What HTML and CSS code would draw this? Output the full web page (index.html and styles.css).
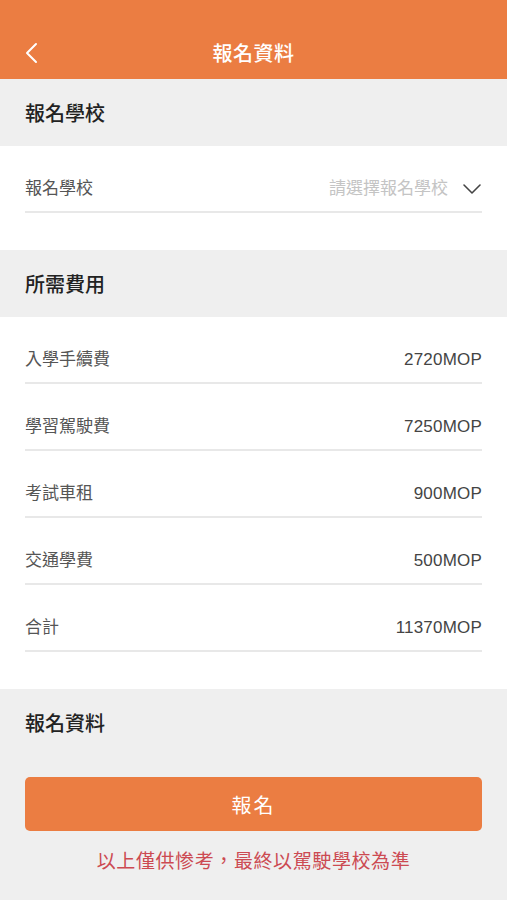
FILE: index.html
```html
<html>
<head>
    <meta name="viewport" content="width=device-width, initial-scale=1.0" />
    <title>報名資料</title>
    <link rel="stylesheet" href="styles.css">
</head>
<body>
    <header class="navbar">
        <div class="navbar-inner">
            <span class="back">
                <svg width="14" height="22" viewBox="0 0 14 22"><path d="M12 2 L3 11 L12 20" fill="none" stroke="#fff" stroke-width="2" stroke-linecap="round" stroke-linejoin="round"/></svg>
            </span>
            <span class="title">報名資料</span>
        </div>
    </header>

    <div class="section-title">報名學校</div>
    <div class="block">
        <div class="row">
            <span class="label">報名學校</span>
            <span class="picker">
                <span class="placeholder">請選擇報名學校</span>
                <svg width="20" height="12" viewBox="0 0 20 12"><path d="M2 2 L10 10 L18 2" fill="none" stroke="#444" stroke-width="1.6" stroke-linecap="round" stroke-linejoin="round"/></svg>
            </span>
        </div>
    </div>

    <div class="section-title">所需費用</div>
    <div class="block">
        <div class="row"><span class="label">入學手續費</span><span class="value">2720MOP</span></div>
        <div class="row"><span class="label">學習駕駛費</span><span class="value">7250MOP</span></div>
        <div class="row"><span class="label">考試車租</span><span class="value">900MOP</span></div>
        <div class="row"><span class="label">交通學費</span><span class="value">500MOP</span></div>
        <div class="row"><span class="label">合計</span><span class="value">11370MOP</span></div>
    </div>

    <div class="section-title">報名資料</div>
    <div class="footer">
        <button class="submit">報名</button>
        <p class="notice">以上僅供惨考，最終以駕駛學校為準</p>
    </div>
</body>
</html>
```

FILE: styles.css
```css
html, body {
    margin: 0;
    padding: 0;
    background-color: #efefef;
    font-family: "Liberation Sans", "Noto Sans CJK TC", sans-serif;
}
.navbar {
    background-color: #eb7d42;
    padding-top: 25px;
    height: 54px;
}
.navbar-inner {
    height: 54px;
    display: flex;
    align-items: center;
    justify-content: center;
    position: relative;
}
.back {
    position: absolute;
    left: 24px;
    top: 17px;
    display: flex;
}
.title {
    color: #fff;
    font-size: 20px;
    font-weight: 500;
    letter-spacing: 0.5px;
}
.section-title {
    height: 67px;
    box-sizing: border-box;
    padding: 0 25px;
    display: flex;
    align-items: center;
    font-size: 20px;
    font-weight: 500;
    color: #222;
}
.block {
    background-color: #fff;
    padding: 0 25px 37px 25px;
}
.row {
    height: 67px;
    box-sizing: border-box;
    padding-top: 31px;
    border-bottom: 2px solid #e8e8e8;
    display: flex;
    justify-content: space-between;
    align-items: flex-start;
    font-size: 17px;
    line-height: 24px;
}
.label {
    color: #555;
}
.value {
    color: #444;
    letter-spacing: 0.2px;
}
.picker {
    display: flex;
    align-items: center;
    height: 24px;
}
.placeholder {
    color: #c4c4c4;
    margin-right: 14px;
}
.footer {
    padding: 21px 25px 0 25px;
}
.submit {
    display: block;
    width: 100%;
    height: 54px;
    border: none;
    border-radius: 5px;
    background-color: #eb7d42;
    color: #fff;
    font-family: "Liberation Sans", "Noto Sans CJK TC", sans-serif;
    font-size: 20px;
    letter-spacing: 2px;
}
.notice {
    margin: 17px 0 0 0;
    text-align: center;
    color: #cc4a52;
    font-size: 19px;
    letter-spacing: 0.6px;
    line-height: 28px;
}
```
